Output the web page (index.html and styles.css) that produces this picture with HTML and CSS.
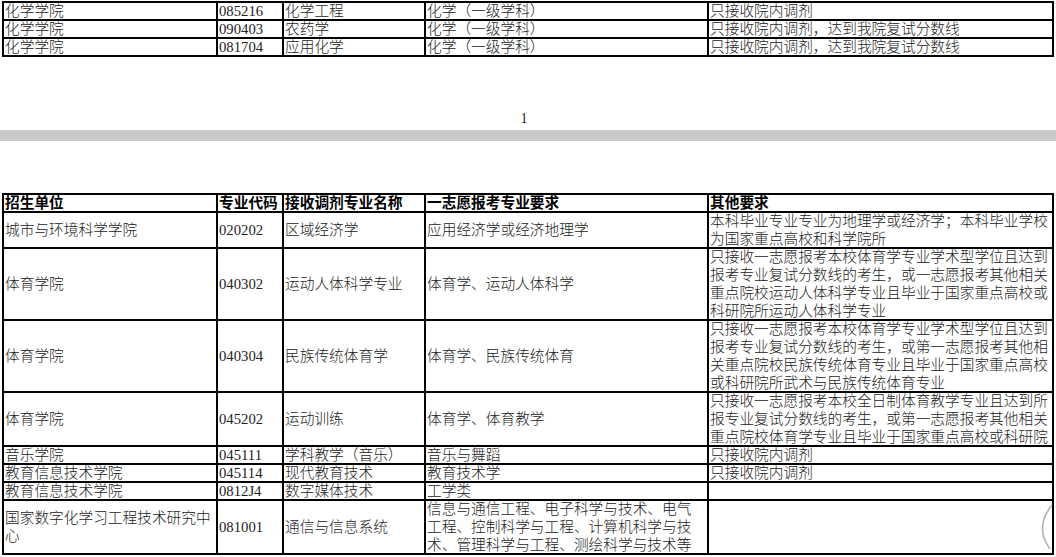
FILE: index.html
```html
<!DOCTYPE html>
<html lang="zh-CN">
<head>
<meta charset="utf-8">
<title>调剂专业表</title>
<link rel="stylesheet" href="styles.css">
</head>
<body>
<div class="page">
  <table class="grid top">
    <colgroup><col class="c1"><col class="c2"><col class="c3"><col class="c4"><col class="c5"></colgroup>
    <tr><td><div class="t">化学学院</div></td><td><div class="t">085216</div></td><td><div class="t">化学工程</div></td><td><div class="t">化学（一级学科）</div></td><td><div class="t">只接收院内调剂</div></td></tr>
    <tr><td><div class="t">化学学院</div></td><td><div class="t">090403</div></td><td><div class="t">农药学</div></td><td><div class="t">化学（一级学科）</div></td><td><div class="t">只接收院内调剂，达到我院复试分数线</div></td></tr>
    <tr><td><div class="t">化学学院</div></td><td><div class="t">081704</div></td><td><div class="t">应用化学</div></td><td><div class="t">化学（一级学科）</div></td><td><div class="t">只接收院内调剂，达到我院复试分数线</div></td></tr>
  </table>
  <div class="page-num">1</div>
</div>
<div class="divider"></div>
<div class="page">
  <table class="grid bottom">
    <colgroup><col class="c1"><col class="c2"><col class="c3"><col class="c4"><col class="c5"></colgroup>
    <tr class="head"><td><div class="t">招生单位</div></td><td><div class="t">专业代码</div></td><td><div class="t">接收调剂专业名称</div></td><td><div class="t">一志愿报考专业要求</div></td><td><div class="t">其他要求</div></td></tr>
    <tr><td class="mid"><div class="t">城市与环境科学学院</div></td><td class="mid"><div class="t">020202</div></td><td class="mid"><div class="t">区域经济学</div></td><td class="mid"><div class="t">应用经济学或经济地理学</div></td><td><div class="t">本科毕业专业专业为地理学或经济学；本科毕业学校<br>为国家重点高校和科学院所</div></td></tr>
    <tr><td class="mid"><div class="t">体育学院</div></td><td class="mid"><div class="t">040302</div></td><td class="mid"><div class="t">运动人体科学专业</div></td><td class="mid"><div class="t">体育学、运动人体科学</div></td><td><div class="t">只接收一志愿报考本校体育学专业学术型学位且达到<br>报考专业复试分数线的考生，或一志愿报考其他相关<br>重点院校运动人体科学专业且毕业于国家重点高校或<br>科研院所运动人体科学专业</div></td></tr>
    <tr><td class="mid"><div class="t">体育学院</div></td><td class="mid"><div class="t">040304</div></td><td class="mid"><div class="t">民族传统体育学</div></td><td class="mid"><div class="t">体育学、民族传统体育</div></td><td><div class="t">只接收一志愿报考本校体育学专业学术型学位且达到<br>报考专业复试分数线的考生，或第一志愿报考其他相<br>关重点院校民族传统体育专业且毕业于国家重点高校<br>或科研院所武术与民族传统体育专业</div></td></tr>
    <tr><td class="mid"><div class="t">体育学院</div></td><td class="mid"><div class="t">045202</div></td><td class="mid"><div class="t">运动训练</div></td><td class="mid"><div class="t">体育学、体育教学</div></td><td><div class="t">只接收一志愿报考本校全日制体育教学专业且达到所<br>报专业复试分数线的考生，或第一志愿报考其他相关<br>重点院校体育学专业且毕业于国家重点高校或科研院</div></td></tr>
    <tr><td><div class="t">音乐学院</div></td><td><div class="t">045111</div></td><td><div class="t">学科教学（音乐）</div></td><td><div class="t">音乐与舞蹈</div></td><td><div class="t">只接收院内调剂</div></td></tr>
    <tr><td><div class="t">教育信息技术学院</div></td><td><div class="t">045114</div></td><td><div class="t">现代教育技术</div></td><td><div class="t">教育技术学</div></td><td><div class="t">只接收院内调剂</div></td></tr>
    <tr><td><div class="t">教育信息技术学院</div></td><td><div class="t">0812J4</div></td><td><div class="t">数字媒体技术</div></td><td><div class="t">工学类</div></td><td><div class="t">&nbsp;</div></td></tr>
    <tr><td class="mid"><div class="t">国家数字化学习工程技术研究中<br>心</div></td><td class="mid"><div class="t">081001</div></td><td class="mid"><div class="t">通信与信息系统</div></td><td><div class="t">信息与通信工程、电子科学与技术、电气<br>工程、控制科学与工程、计算机科学与技<br>术、管理科学与工程、测绘科学与技术等</div></td><td><div class="t">&nbsp;</div></td></tr>
  </table>
</div>
<svg class="curl" width="24" height="48" viewBox="0 0 24 48" aria-hidden="true">
  <path d="M22 2 Q4 24 20 46" fill="none" stroke="#b4b4b4" stroke-width="1.6"/>
</svg>
</body>
</html>
```

FILE: styles.css
```css
html, body {
  margin: 0;
  padding: 0;
  background: #ffffff;
}

body {
  width: 1056px;
  height: 557px;
  overflow: hidden;
  position: relative;
  font-family: "Liberation Serif", "Noto Sans CJK SC", serif;
  font-size: 14.7px;
  font-weight: 300;
  color: #222;
}

.page {
  padding-left: 2px;
}

.grid {
  border-collapse: collapse;
  table-layout: fixed;
  width: 1050px;
}

.grid.top {
  margin-top: 1px;
}

.grid.bottom {
  margin-top: 52px;
}

.c1 { width: 214px; }
.c2 { width: 66px; }
.c3 { width: 142px; }
.c4 { width: 283px; }
.c5 { width: 345px; }

.grid td {
  border: 2px solid #000;
  padding: 0 0 0 1px;
  vertical-align: bottom;
  white-space: nowrap;
  overflow: hidden;
}

.grid td.mid {
  vertical-align: middle;
}

.t {
  line-height: 18px;
  margin: -1px 0;
}

.head td {
  font-weight: 700;
  color: #000;
}

.page-num {
  margin-top: 53px;
  height: 18px;
  line-height: 18px;
  text-align: center;
  font-size: 14px;
  padding-right: 10px;
}

.divider {
  margin-top: 2px;
  height: 11px;
  background: #c9c9c9;
}

.curl {
  position: absolute;
  right: 2px;
  bottom: 6px;
}
```
